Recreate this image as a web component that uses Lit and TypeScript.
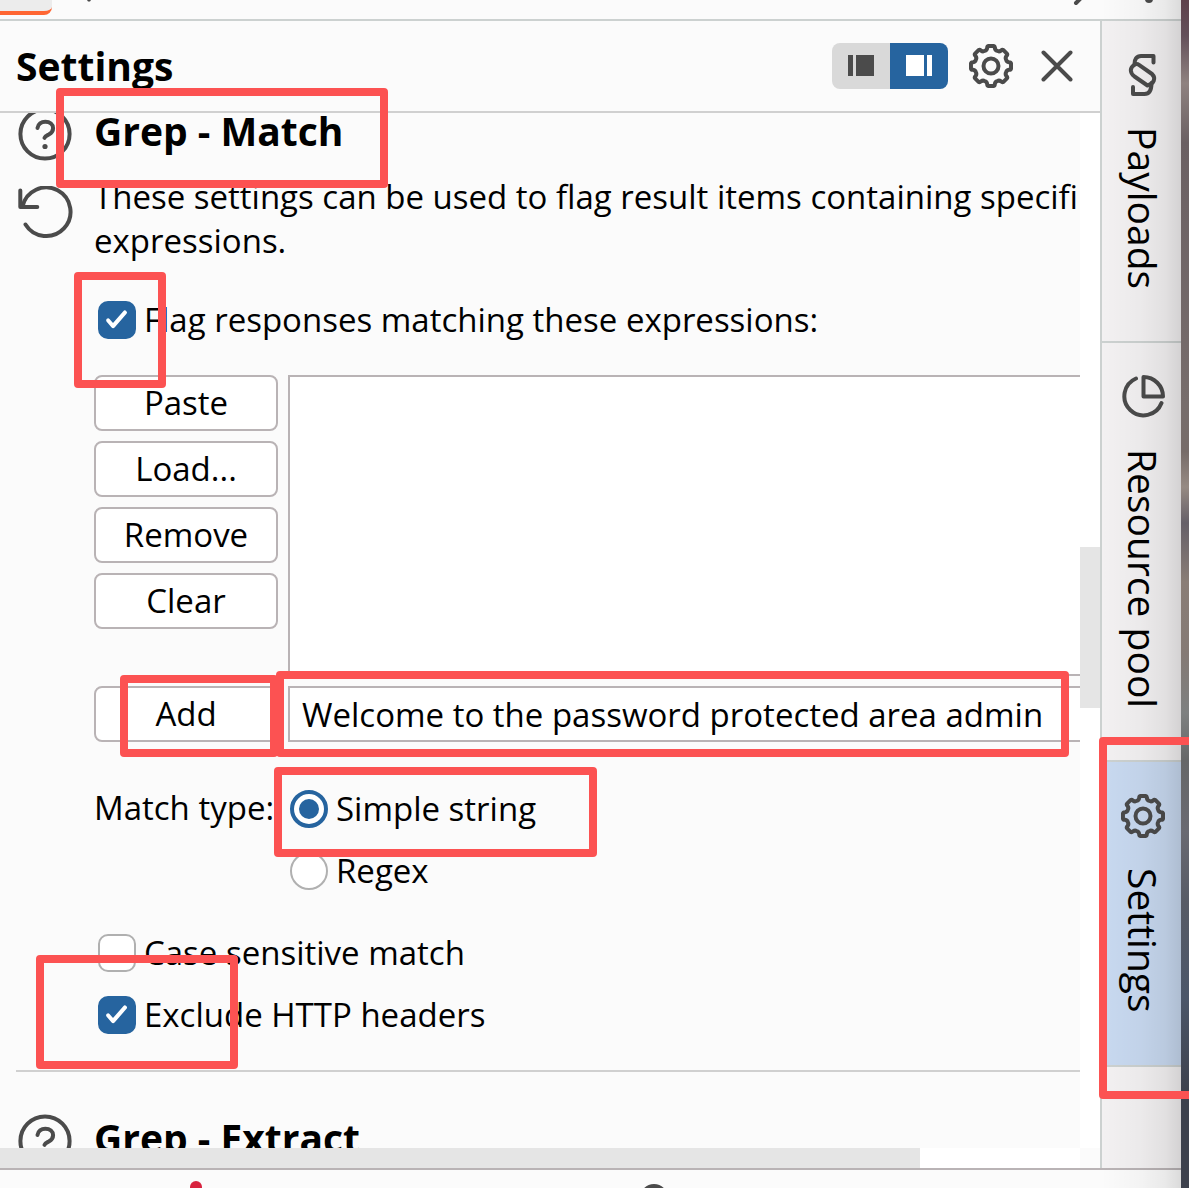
import { LitElement, html, css } from "lit";
import { customElement, state } from "lit/decorators.js";

const cog = (() => {
  const pts: string[] = [];
  const teeth = 8;
  const at = (r: number, deg: number) => {
    const a = (deg * Math.PI) / 180;
    return `${(22 + r * Math.cos(a)).toFixed(2)} ${(22 + r * Math.sin(a)).toFixed(2)}`;
  };
  for (let i = 0; i < teeth; i++) {
    const c = i * (360 / teeth) - 90;
    pts.push(`${i === 0 ? "M" : "L"}${at(18.4, c - 12)}`);
    pts.push(`Q${at(20.2, c - 11)} ${at(20.2, c - 7)}`);
    pts.push(`L${at(20.2, c + 7)}`);
    pts.push(`Q${at(20.2, c + 11)} ${at(18.4, c + 12)}`);
    pts.push(`Q${at(16.2, c + 15)} ${at(16.4, c + 22.5)}`);
    pts.push(`Q${at(16.2, c + 30)} ${at(18.4, c + 33)}`);
  }
  return pts.join("") + "Z";
})();

const cogIcon = html`<svg class="icon" width="44" height="44" viewBox="0 0 44 44" aria-hidden="true">
  <path d=${cog} /><circle cx="22" cy="22" r="7.5" />
</svg>`;

const helpIcon = html`<svg class="icon" width="54" height="54" viewBox="0 0 54 54" aria-hidden="true">
  <circle cx="27" cy="27" r="24.6" />
  <path d="M19.5 21c.6-4 3.800-6.300 7.800-6.300 4.600 0 7.800 2.700 7.800 6.600 0 3.200-1.900 4.900-4.300 6.200-2.500 1.300-3.800 1.800-4.300 3.400" />
  <circle class="solid" cx="27" cy="39.500" r="2.600" />
</svg>`;

const resetIcon = html`<svg class="icon" width="56" height="54" viewBox="0 0 56 54" aria-hidden="true">
  <path d="M7.500 38.500A24.300 24.300 0 1 0 4.500 20.500" />
  <path d="M2.300 4.500v16.500h17" />
</svg>`;

const closeIcon = html`<svg class="icon" width="32" height="32" viewBox="0 0 32 32" aria-hidden="true">
  <path d="M2.500 2.500l27 27M29.500 2.500l-27 27" />
</svg>`;

const pieIcon = html`<svg class="icon" width="44" height="44" viewBox="0 0 44 44" aria-hidden="true">
  <path d="M15 3.500A19.200 19.200 0 1 0 40.500 28" />
  <path d="M22.500 2v19.500H42A19.500 19.500 0 0 0 22.500 2z" />
</svg>`;

const payloadIcon = html`<svg class="icon" width="44" height="44" viewBox="0 0 44 44" aria-hidden="true">
  <path d="M32.500 9.500V3H20c-4.500 0-6.500 3.500-6.500 8" />
  <path d="M14 11.500C8.500 14.500 8.500 19.500 13.500 23.500l13 9C32.500 31 35.500 25.500 31 21L18 11.800C16.500 10.800 15 11 14 11.500z" />
  <path d="M30.500 30c0 6-1.500 11-7 11H12v-7" />
</svg>`;

const marks = ["heading", "flag", "add", "value", "type", "exclude", "tab"];

@customElement("app-root")
export class AppRoot extends LitElement {
  @state() private tab = "Settings";

  static styles = css`
    :host {
      display: block;
      position: relative;
      height: 100vh;
      overflow: hidden;
      color: #000;
      font: 33px/44px "Open Sans", "Noto Sans", sans-serif;
      --ink: #4b4b4b;
      --line: #ccd1d0;
      --edge: #b9b3b5;
      --blue: #26649f;
    }
    * { box-sizing: border-box; }
    button, input { font: inherit; color: inherit; margin: 0; }
    .icon {
      display: block;
      fill: none;
      stroke: var(--ink);
      stroke-width: 4;
      stroke-linecap: round;
      stroke-linejoin: round;
    }
    .icon .solid { fill: var(--ink); stroke: none; }
    .desktop {
      height: 100%;
      padding-right: 8px;
      background: linear-gradient(#5e414b 0, #64505a 3%, #8f8280 7%, #6b6063 12%, #776d6c 34%, #776c69 38%, #968a83 41%, #666068 44%, #8a7d76 49%, #857a75 55%, #7e8080 60%, #666768 64%, #6a6a72 70%, #575b66 76%, #4b5669 84%, #3d414d 92%, #3d414d 100%);
    }
    .window {
      position: relative;
      display: flex;
      flex-direction: column;
      height: 100%;
      background: #fbfbfb;
    }
    .window::after {
      content: "";
      position: absolute;
      inset: 0 0 0 auto;
      width: 80px;
      background: linear-gradient(90deg, transparent, rgba(0, 0, 0, 0.03) 50%, rgba(0, 0, 0, 0.07) 80%, rgba(0, 0, 0, 0.13));
      pointer-events: none;
    }
    .top {
      flex: none;
      display: flex;
      justify-content: space-between;
      height: 21px;
      border-bottom: 2px solid var(--line);
    }
    .top-tab {
      width: 52px;
      height: 15px;
      background: #ececec;
      border-bottom: 4px solid #ff6633;
      border-radius: 0 0 8px 0;
    }
    .top svg, .foot svg { display: block; flex: none; }
    .glyph { margin-left: 32px; margin-right: auto; }
    .body { flex: 1; display: flex; min-height: 0; }
    .panel { flex: 1; min-width: 0; display: flex; flex-direction: column; }
    .head {
      flex: none;
      display: flex;
      align-items: center;
      height: 92px;
      padding: 0 27px 0 16px;
      border-bottom: 2px solid #d0d0d0;
    }
    h1, h2 { margin: 0; font-size: 39px; line-height: 36px; font-weight: 700; }
    h2 { margin-top: 6px; }
    .head h1 { flex: 1; }
    .dock { display: flex; margin-right: 21px; border-radius: 8px; overflow: hidden; }
    .dock button {
      display: grid;
      place-items: center;
      width: 58px;
      height: 46px;
      padding: 0;
      border: 0;
      background: #d9d9d9;
      fill: var(--ink);
    }
    .dock .on { background: var(--blue); fill: #fff; }
    .plain { padding: 0; border: 0; background: none; }
    .close { margin-left: 28px; }
    .scroll {
      flex: 1;
      min-height: 0;
      display: grid;
      grid-template: minmax(0, 1fr) 20px / minmax(0, 1fr) 20px;
    }
    .view { overflow: hidden; }
    .bar { background: #fff; }
    .bar.v { padding-top: 434px; }
    .thumb { background: #e5e5e5; }
    .bar.v .thumb { height: 161px; }
    .bar.h .thumb { width: 920px; max-width: 86%; height: 20px; }
    .section {
      display: grid;
      grid-template-columns: 56px minmax(0, 1fr);
      column-gap: 20px;
      margin-left: 18px;
    }
    .first { margin-top: -6px; }
    .tools { display: flex; flex-direction: column; align-items: flex-start; gap: 25px; }
    .about { margin: 26px 0 0; white-space: nowrap; }
    .check, .radio { display: flex; align-items: center; gap: 8px; height: 38px; line-height: 36px; }
    .check { padding-left: 4px; }
    .flag { margin-top: 38px; }
    .check input, .radio input {
      flex: none;
      appearance: none;
      display: grid;
      place-items: center;
      width: 38px;
      height: 38px;
      border: 2px solid #b0b0b0;
      border-radius: 10px;
      background: #fff;
    }
    .check input:checked { background: var(--blue); border-color: var(--blue); }
    .check input:checked::after {
      content: "";
      width: 22px;
      height: 20px;
      background: #fff;
      clip-path: path("M0.500 11.500a2 2 0 0 1 3-2.600l3.500 4L17.300 1.200a2 2 0 0 1 3.200 2.600L8.800 17.300a2.200 2.200 0 0 1-3.400 0z");
    }
    .radio input { border-radius: 50%; }
    .radio input:checked { border: 4px solid var(--blue); }
    .radio input:checked::after {
      content: "";
      width: 20px;
      height: 20px;
      border-radius: 50%;
      background: var(--blue);
    }
    .editor {
      display: grid;
      grid-template-columns: 184px minmax(0, 1fr);
      gap: 10px;
      margin-top: 36px;
    }
    .stack { display: flex; flex-direction: column; gap: 10px; }
    .btn {
      width: 100%;
      height: 56px;
      padding: 0;
      border: 2px solid var(--edge);
      border-radius: 8px;
      background: #fff;
      text-align: center;
    }
    .list {
      height: 301px;
      border: 2px solid var(--edge);
      border-right: 0;
      background: #fff;
    }
    .value {
      width: 100%;
      height: 56px;
      padding: 0 12px;
      border: 2px solid var(--edge);
      border-right: 0;
      border-radius: 0;
      background: #fff;
    }
    .types {
      display: grid;
      grid-template-columns: 184px minmax(0, 1fr);
      column-gap: 12px;
      margin-top: 48px;
    }
    .types > span { line-height: 36px; white-space: nowrap; }
    .options { display: flex; flex-direction: column; gap: 24px; }
    .case { margin-top: 44px; }
    .exclude { margin-top: 24px; }
    .rule { height: 2px; margin: 36px 0 42px 16px; border: 0; background: #d0d0d0; }
    .rail {
      flex: none;
      display: flex;
      flex-direction: column;
      width: 81px;
      border-left: 2px solid var(--line);
      background: #f3f1f2;
    }
    .rail button {
      display: flex;
      flex-direction: column;
      align-items: center;
      gap: 30px;
      padding: 32px 0 52px 2px;
      border: 0;
      border-bottom: 2px solid var(--line);
      background: none;
      font-size: 39px;
      line-height: 56px;
    }
    .rail button.on { background: #c8d9f0; }
    .rail .label { writing-mode: vertical-rl; }
    .foot {
      flex: none;
      display: flex;
      align-items: flex-end;
      gap: 438px;
      height: 20px;
      padding-left: 189px;
      border-top: 2px solid var(--edge);
    }
    .mark {
      position: absolute;
      border: 8px solid #fc5252;
      border-radius: 4px;
      pointer-events: none;
    }
    .mark.heading { left: 56px; top: 88px; width: 332px; height: 100px; }
    .mark.flag { left: 74px; top: 272px; width: 92px; height: 116px; margin: 0; }
    .mark.add { left: 120px; top: 675px; width: 158px; height: 82px; }
    .mark.value { left: 276px; top: 671px; width: 793px; height: 86px; padding: 0; background: none; }
    .mark.type { left: 274px; top: 767px; width: 323px; height: 90px; }
    .mark.exclude { left: 36px; top: 955px; width: 202px; height: 114px; margin: 0; }
    .mark.tab { left: 1099px; top: 737px; width: 110px; height: 362px; }
  `;

  private railTab(name: string, icon: unknown) {
    return html`<button class=${this.tab === name ? "on" : ""} @click=${() => (this.tab = name)}>
      ${icon}<span class="label">${name}</span>
    </button>`;
  }

  render() {
    return html`
      <div class="desktop">
        <div class="window">
          <div class="top">
            <div class="top-tab"></div>
            <svg class="glyph" width="10" height="4" viewBox="0 0 10 4" aria-hidden="true">
              <path d="M3 0h4l-1 1.500h-2z" fill="#4b4b4b" />
            </svg>
            <svg width="110" height="8" viewBox="0 0 110 8" aria-hidden="true">
              <path d="M5 3L10 -2" stroke="#4b4b4b" stroke-width="4" stroke-linecap="round" />
              <circle cx="78" cy="-1" r="4" fill="#4b4b4b" />
            </svg>
          </div>
          <div class="body">
            <main class="panel">
              <header class="head">
                <h1>Settings</h1>
                <div class="dock">
                  <button aria-label="Dock left">
                    <svg width="26" height="22" viewBox="0 0 26 22"><path d="M0 0h5v21H0zM8 0h18v21H8z" /></svg>
                  </button>
                  <button class="on" aria-label="Dock right">
                    <svg width="26" height="22" viewBox="0 0 26 22"><path d="M0 0h18v21H0zM21 0h5v21h-5z" /></svg>
                  </button>
                </div>
                <button class="plain" aria-label="Options">${cogIcon}</button>
                <button class="plain close" aria-label="Close">${closeIcon}</button>
              </header>
              <div class="scroll">
                <div class="view">
                  <section class="section first">
                    <div class="tools">
                      <button class="plain" aria-label="Help">${helpIcon}</button>
                      <button class="plain" aria-label="Reset">${resetIcon}</button>
                    </div>
                    <div>
                      <h2>Grep - Match</h2>
                      <p class="about">These settings can be used to flag result items containing specifi<br />expressions.</p>
                      <label class="check flag"><input type="checkbox" checked />Flag responses matching these expressions:</label>
                      <div class="editor">
                        <div class="stack">
                          ${["Paste", "Load...", "Remove", "Clear"].map((t) => html`<button class="btn">${t}</button>`)}
                        </div>
                        <div class="list" role="listbox" aria-label="Expressions"></div>
                        <button class="btn">Add</button>
                        <input class="value" type="text" aria-label="New expression" value="Welcome to the password protected area admin" />
                      </div>
                      <div class="types" role="radiogroup" aria-labelledby="match-type">
                        <span id="match-type">Match type:</span>
                        <div class="options">
                          <label class="radio"><input type="radio" name="match" checked />Simple string</label>
                          <label class="radio"><input type="radio" name="match" />Regex</label>
                        </div>
                      </div>
                      <label class="check case"><input type="checkbox" />Case sensitive match</label>
                      <label class="check exclude"><input type="checkbox" checked />Exclude HTTP headers</label>
                    </div>
                  </section>
                  <hr class="rule" />
                  <section class="section">
                    <div class="tools">
                      <button class="plain" aria-label="Help">${helpIcon}</button>
                    </div>
                    <h2>Grep - Extract</h2>
                  </section>
                </div>
                <div class="bar v"><div class="thumb"></div></div>
                <div class="bar h"><div class="thumb"></div></div>
              </div>
            </main>
            <nav class="rail">
              ${this.railTab("Payloads", payloadIcon)}
              ${this.railTab("Resource pool", pieIcon)}
              ${this.railTab("Settings", cogIcon)}
            </nav>
          </div>
          <footer class="foot">
            <svg width="14" height="8" viewBox="0 0 14 8" aria-hidden="true"><circle cx="7" cy="7" r="6" fill="#d8233f" /></svg>
            <svg width="26" height="4" viewBox="0 0 26 4" aria-hidden="true"><circle cx="13" cy="14" r="12" fill="none" stroke="#4b4b4b" stroke-width="4" /></svg>
          </footer>
        </div>
      </div>
      ${marks.map((m) => html`<div class="mark ${m}"></div>`)}
    `;
  }
}
